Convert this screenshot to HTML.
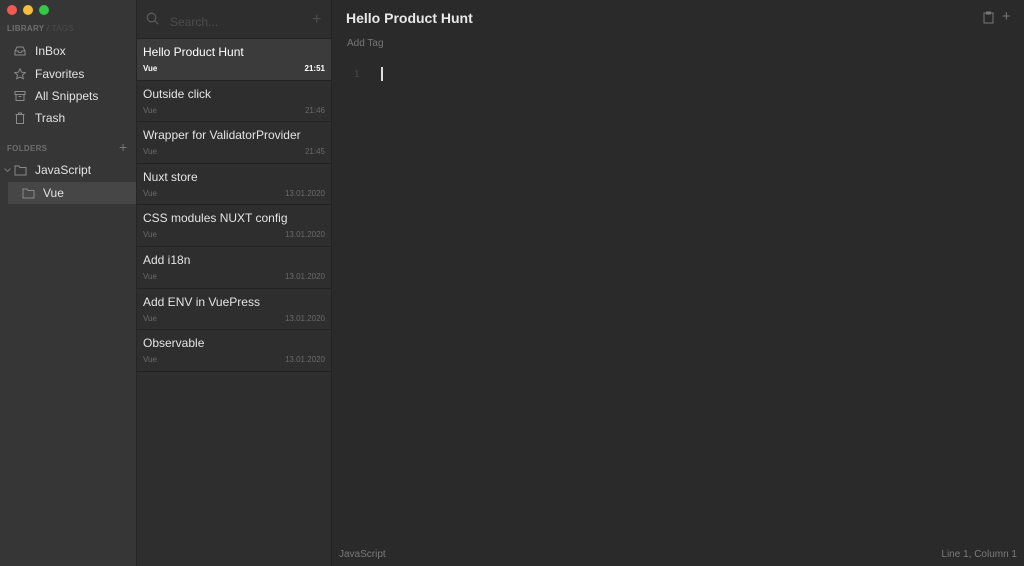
<!DOCTYPE html>
<html><head><meta charset="utf-8"><style>
*{box-sizing:border-box;margin:0;padding:0}
body{width:1024px;height:566px;overflow:hidden;font-family:"Liberation Sans",sans-serif;background:#2b2b2b;position:relative;color:#ddd}
.side{position:absolute;left:0;top:0;width:137px;height:566px;background:#363636;border-right:1px solid #252525}
.dot{position:absolute;top:5px;width:10px;height:10px;border-radius:50%}
.lbl{position:absolute;font-size:8px;font-weight:bold;color:#6e6e6e;letter-spacing:.3px}
.nav{position:absolute;left:0;width:136px;height:22px;font-size:12px;color:#e2e2e2;line-height:22px}
.nav span{position:absolute;left:35px}
.nav svg{position:absolute;left:14px;top:5px}
.list{position:absolute;left:137px;top:0;width:195px;height:566px;background:#2e2e2e;border-right:1px solid #232323}
.item{position:absolute;left:0;width:194px;height:41.6px;border-bottom:1px solid #232323}
.item .t{position:absolute;left:6px;top:6px;font-size:12px;color:#e4e4e4}
.item .a{position:absolute;left:6px;top:25px;font-size:8px;color:#6a6a6a}
.item .d{position:absolute;right:6px;top:25px;font-size:8px;color:#6a6a6a}
.ed{position:absolute;left:332px;top:0;right:0;height:566px;background:#2a2a2a}
</style></head><body>
<div class="side">
<div class="dot" style="left:7px;background:#ed5b55"></div>
<div class="dot" style="left:23px;background:#f4bc40"></div>
<div class="dot" style="left:39px;background:#34c748"></div>
<div class="lbl" style="left:7px;top:24px">LIBRARY <span style="color:#4d4d4d;font-weight:normal">/ TAGS</span></div>
<div class="nav" style="top:40px"><svg width="12" height="12" viewBox="0 0 12 12" fill="none" stroke="#8a8a8a"><path d="M1 6l2-4h6l2 4v4H1z M1 6h3l1 1.5h2L8 6h3"/></svg><span>InBox</span></div>
<div class="nav" style="top:63px"><svg width="12" height="12" viewBox="0 0 12 12" fill="none" stroke="#8a8a8a"><path d="M6 .8l1.6 3.4 3.6.4-2.7 2.5.8 3.6L6 8.9 2.7 10.7l.8-3.6L.8 4.6l3.6-.4z"/></svg><span>Favorites</span></div>
<div class="nav" style="top:85px"><svg width="12" height="12" viewBox="0 0 12 12" fill="none" stroke="#8a8a8a"><path d="M1 1.5h10v3H1z M2 4.5v6h8v-6 M4.5 6.5h3"/></svg><span>All Snippets</span></div>
<div class="nav" style="top:107px"><svg width="12" height="12" viewBox="0 0 12 12" fill="none" stroke="#8a8a8a"><path d="M1.5 2.5h9 M4.5 2.5V1h3v1.5 M2.5 2.5v9h7v-9"/></svg><span>Trash</span></div>
<div class="lbl" style="left:7px;top:144px">FOLDERS</div>
<div style="position:absolute;left:119px;top:139px;color:#777;font-size:14px">+</div>
<div class="nav" style="top:159px"><svg style="left:4px;top:9px" width="7" height="5" viewBox="0 0 7 5" fill="none" stroke="#777"><path d="M.5.5l3 3 3-3"/></svg><svg width="13" height="12" viewBox="0 0 13 12" fill="none" stroke="#8a8a8a"><path d="M1 2h4l1 1.5h6V11H1z"/></svg><span>JavaScript</span></div>
<div class="nav" style="top:182px;left:8px;width:128px;background:#464646"><svg style="left:14px" width="13" height="12" viewBox="0 0 13 12" fill="none" stroke="#8a8a8a"><path d="M1 2h4l1 1.5h6V11H1z"/></svg><span>Vue</span></div>
</div>
<div class="list">
<svg style="position:absolute;left:9px;top:12px" width="13" height="13" viewBox="0 0 13 13" fill="none" stroke="#5a5a5a" stroke-width="1.3"><circle cx="5.5" cy="5.5" r="4.3"/><path d="M8.7 8.7l3.5 3.5"/></svg>
<div style="position:absolute;left:33px;top:15px;font-size:12px;color:#4d4d4d">Search...</div>
<div style="position:absolute;left:175px;top:11px;font-size:16px;color:#4d4d4d">+</div>
<div style="position:absolute;left:0;top:38px;width:194px;border-top:1px solid #232323"></div>
<div class="item" style="top:39px;background:#3b3b3b"><div class="t" style="color:#fff">Hello Product Hunt</div><div class="a" style="color:#fff;font-weight:bold">Vue</div><div class="d" style="color:#fff;font-weight:bold">21:51</div></div>
<div class="item" style="top:80.6px"><div class="t">Outside click</div><div class="a">Vue</div><div class="d">21:46</div></div>
<div class="item" style="top:122.2px"><div class="t">Wrapper for ValidatorProvider</div><div class="a">Vue</div><div class="d">21:45</div></div>
<div class="item" style="top:163.8px"><div class="t">Nuxt store</div><div class="a">Vue</div><div class="d">13.01.2020</div></div>
<div class="item" style="top:205.4px"><div class="t">CSS modules NUXT config</div><div class="a">Vue</div><div class="d">13.01.2020</div></div>
<div class="item" style="top:247px"><div class="t">Add i18n</div><div class="a">Vue</div><div class="d">13.01.2020</div></div>
<div class="item" style="top:288.6px"><div class="t">Add ENV in VuePress</div><div class="a">Vue</div><div class="d">13.01.2020</div></div>
<div class="item" style="top:330.2px"><div class="t">Observable</div><div class="a">Vue</div><div class="d">13.01.2020</div></div>
</div>
<div class="ed">
<div style="position:absolute;left:14px;top:10px;font-size:14px;font-weight:bold;color:#e8e8e8">Hello Product Hunt</div>
<svg style="position:absolute;left:651px;top:11px" width="11" height="13" viewBox="0 0 11 13" fill="none" stroke="#777"><path d="M1 2h9v10H1z M3.5 1h4v2h-4z"/></svg>
<div style="position:absolute;left:670px;top:8px;font-size:15px;color:#777">+</div>
<div style="position:absolute;left:15px;top:38px;font-size:10px;color:#777">Add Tag</div>
<div style="position:absolute;left:22px;top:69px;font-size:10px;color:#4a4a4a">1</div>
<div style="position:absolute;left:49px;top:67px;width:2px;height:14px;background:#ddd"></div>
<div style="position:absolute;left:7px;top:549px;font-size:10px;color:#7a7a7a">JavaScript</div>
<div style="position:absolute;right:7px;top:549px;font-size:10px;color:#7a7a7a">Line 1, Column 1</div>
</div>
</body></html>
